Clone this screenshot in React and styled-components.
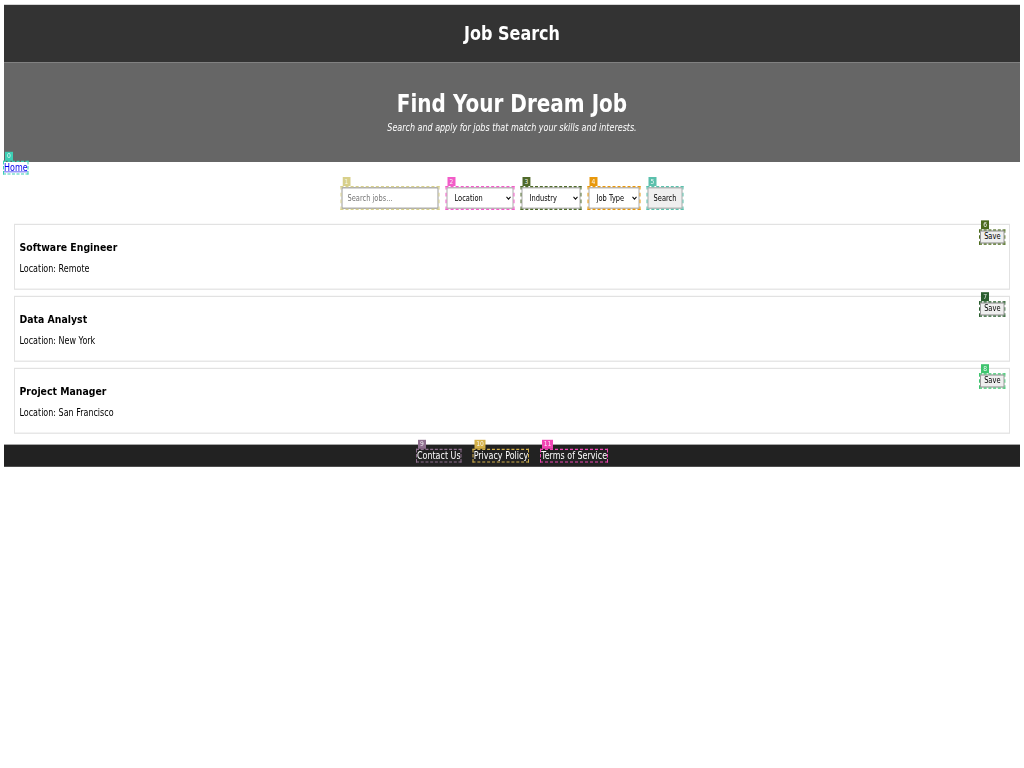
import React from 'react';
import styled, { createGlobalStyle } from 'styled-components';

// The reference was taken from a 2048x1280 page and shrunk to 1024x768,
// so the page is written at that size and scaled down as a whole.
const GlobalStyle = createGlobalStyle`
  html, body {
    margin: 0;
    overflow: hidden;
    background: #fff;
  }
  body {
    font-family: "DejaVu Sans", sans-serif;
    font-size: 16px;
    color: #000;
  }
`;

const Screen = styled.div`
  width: 1024px;
  height: 768px;
  overflow: hidden;
`;

const Page = styled.div`
  width: 2048px;
  box-sizing: border-box;
  padding: 8px;
  transform: scale(0.5, 0.6);
  transform-origin: 0 0;
`;

const Header = styled.header`
  padding: 29px 0 30px;
  background-color: #333;
  color: #fff;
  text-align: center;
`;

const SiteTitle = styled.h1`
  margin: 0;
  font-size: 32px;
  font-weight: bold;
  line-height: 37px;
`;

const Hero = styled.section`
  padding: 46px 0 47px;
  background-color: #666;
  color: #fff;
  text-align: center;
`;

const HeroTitle = styled.h2`
  margin: 0 0 7px;
  font-size: 40px;
  font-weight: bold;
  line-height: 47px;
`;

const HeroText = styled.p`
  margin: 0;
  font-size: 16px;
  font-style: italic;
  line-height: 19px;
`;

const Nav = styled.nav`
  display: flex;
`;

const Marked = styled.span`
  position: relative;
  display: inline-flex;
  outline: 2px dashed ${(p) => p.$color};
`;

const Badge = styled.span`
  position: absolute;
  left: 2px;
  bottom: calc(100% + 2px);
  min-width: 16px;
  height: 15px;
  padding: 0 3px;
  box-sizing: border-box;
  background: ${(p) => p.$color};
  color: rgba(255, 255, 255, 0.9);
  font-size: 12px;
  line-height: 15px;
  text-align: center;
`;

const HomeLink = styled.a`
  color: #0000ee;
  font-size: 16px;
  line-height: 19px;
  text-decoration: underline;
`;

const SearchForm = styled.form`
  display: flex;
  justify-content: center;
  gap: 16px;
  margin: 23px 0 0;
`;

const controlText = `
  font-family: "DejaVu Sans", sans-serif;
  font-size: 13.33px;
  color: #000;
`;

const TextInput = styled.input`
  ${controlText}
  width: 194px;
  height: 36px;
  box-sizing: border-box;
  padding: 10px;
  border: 2px solid #999;
  &::placeholder {
    color: #757575;
  }
`;

const Select = styled.select`
  ${controlText}
  width: ${(p) => p.$w}px;
  height: 36px;
  box-sizing: border-box;
  padding: 0 6px 0 10px;
  border: 2px solid #aaa;
  background: #fff;
`;

const SearchButton = styled.button`
  ${controlText}
  width: 70px;
  height: 36px;
  box-sizing: border-box;
  padding: 0;
  border: 2px solid #aaa;
  background: #efefef;
`;

const JobList = styled.main`
  display: flex;
  flex-direction: column;
  gap: 10px;
  margin: 25px 20px 0;
`;

const Card = styled.article`
  border: 2px solid #e2e2e2;
  padding: 9px;
`;

const CardTop = styled.div`
  display: flex;
  justify-content: space-between;
  align-items: flex-start;
`;

const JobTitle = styled.h3`
  margin: 18px 0 15px;
  font-size: 18.72px;
  font-weight: bold;
  line-height: 22px;
`;

const JobLocation = styled.p`
  margin: 0 0 14px;
  font-size: 16px;
  line-height: 19px;
`;

const SaveButton = styled.button`
  ${controlText}
  height: 22px;
  padding: 0 6px;
  border: 2px solid #999;
  background: #efefef;
  line-height: 18px;
`;

const Footer = styled.footer`
  margin-top: 18px;
  padding: 9px 0;
  display: flex;
  justify-content: center;
  gap: 26px;
  background-color: #222;
`;

const FooterLink = styled.a`
  color: #fff;
  font-size: 16px;
  line-height: 19px;
  text-decoration: none;
`;

const jobs = [
  { title: 'Software Engineer', location: 'Remote', mark: 6, color: '#4c6b1c' },
  { title: 'Data Analyst', location: 'New York', mark: 7, color: '#2a5e2e' },
  { title: 'Project Manager', location: 'San Francisco', mark: 8, color: '#3ec46e' },
];

const filters = [
  { label: 'Location', width: 134, mark: 2, color: '#f25cc8' },
  { label: 'Industry', width: 118, mark: 3, color: '#4f6a2a' },
  { label: 'Job Type', width: 102, mark: 4, color: '#e8980c' },
];

const footerLinks = [
  { label: 'Contact Us', mark: 9, color: '#8e6e8e' },
  { label: 'Privacy Policy', mark: 10, color: '#d4b048' },
  { label: 'Terms of Service', mark: 11, color: '#f044b4' },
];

export default function App() {
  return (
    <Screen>
      <GlobalStyle />
      <Page>
        <Header>
          <SiteTitle>Job Search</SiteTitle>
        </Header>
        <Hero>
          <HeroTitle>Find Your Dream Job</HeroTitle>
          <HeroText>Search and apply for jobs that match your skills and interests.</HeroText>
        </Hero>
        <Nav>
          <Marked $color="#3ccfb4">
            <Badge $color="#3ccfb4">0</Badge>
            <HomeLink href="#">Home</HomeLink>
          </Marked>
        </Nav>
        <SearchForm onSubmit={(e) => e.preventDefault()}>
          <Marked $color="#d8d08a">
            <Badge $color="#d8d08a">1</Badge>
            <TextInput placeholder="Search jobs..." />
          </Marked>
          {filters.map((f) => (
            <Marked key={f.label} $color={f.color}>
              <Badge $color={f.color}>{f.mark}</Badge>
              <Select $w={f.width}>
                <option>{f.label}</option>
              </Select>
            </Marked>
          ))}
          <Marked $color="#5bc0ac">
            <Badge $color="#5bc0ac">5</Badge>
            <SearchButton type="submit">Search</SearchButton>
          </Marked>
        </SearchForm>
        <JobList>
          {jobs.map((job) => (
            <Card key={job.title}>
              <CardTop>
                <JobTitle>{job.title}</JobTitle>
                <Marked $color={job.color}>
                  <Badge $color={job.color}>{job.mark}</Badge>
                  <SaveButton>Save</SaveButton>
                </Marked>
              </CardTop>
              <JobLocation>Location: {job.location}</JobLocation>
            </Card>
          ))}
        </JobList>
        <Footer>
          {footerLinks.map((link) => (
            <Marked key={link.label} $color={link.color}>
              <Badge $color={link.color}>{link.mark}</Badge>
              <FooterLink href="#">{link.label}</FooterLink>
            </Marked>
          ))}
        </Footer>
      </Page>
    </Screen>
  );
}
